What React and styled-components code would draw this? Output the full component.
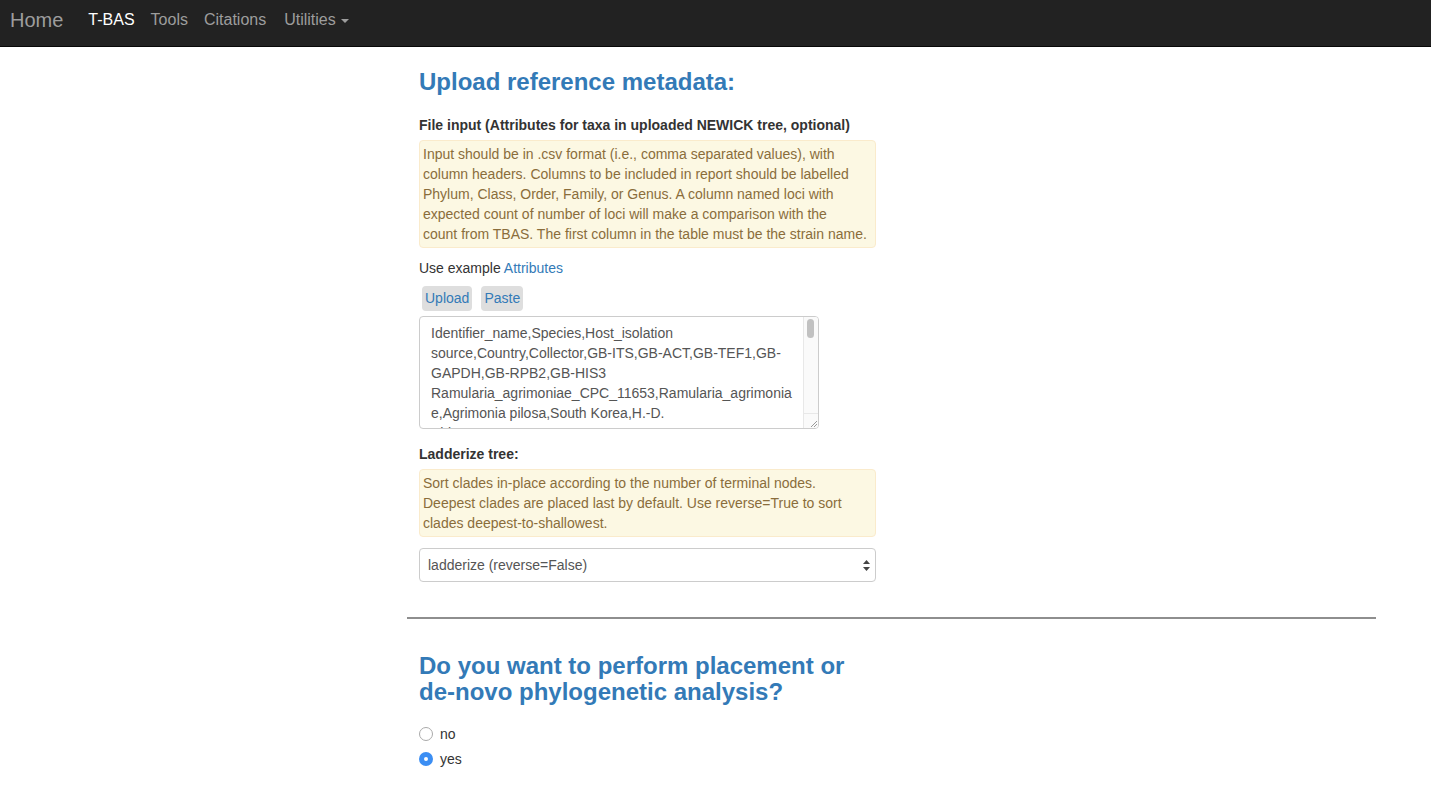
import React from 'react'
import styled, { createGlobalStyle } from 'styled-components'

const GlobalStyle = createGlobalStyle`
body {
  margin: 0;
  font-family: "Liberation Sans", Arial, sans-serif;
  font-size: 14px;
  line-height: 20px;
  color: #333;
  background: #fff;
}
* { box-sizing: border-box; }
`

const Navbar = styled.nav`
display: flex;
align-items: flex-start;
height: 47px;
padding: 10px 0 0 10px;
background: #222;
border-bottom: 1px solid #080808;
`

const Brand = styled.a`
font-size: 20px;
line-height: 20px;
color: #9d9d9d;
margin-right: 25px;
`

const NavLink = styled.a`
font-size: 16px;
line-height: 20px;
color: ${p => (p.$active ? '#fff' : '#9d9d9d')};
margin-right: ${p => p.$gap || '16px'};
display: flex;
align-items: center;
`

const Caret = styled.span`
display: inline-block;
width: 0;
height: 0;
margin-left: 5px;
margin-top: 2px;
border-top: 4px solid #9d9d9d;
border-left: 4px solid transparent;
border-right: 4px solid transparent;
`

const Container = styled.main`
margin-left: 407px;
width: 969px;
padding-top: 2px;
`

const Column = styled.section`
width: 481px;
padding: 0 12px;
`

const Heading = styled.h3`
font-size: 24px;
line-height: 26px;
font-weight: bold;
color: #337ab7;
margin: ${p => p.$top || '20px'} 0 0 0;
`

const Label = styled.label`
display: block;
font-weight: bold;
margin-top: ${p => p.$top || '20px'};
margin-bottom: 5px;
`

const Help = styled.div`
background: #fcf8e3;
border: 1px solid #faebcc;
border-radius: 4px;
color: #8a6d3b;
padding: 3px 3px;
`

const Line = styled.div`
margin-top: 10px;
`

const Link = styled.a`
color: #337ab7;
text-decoration: none;
`

const Buttons = styled.div`
display: flex;
gap: 9px;
margin: 8px 0 5px 3px;
`

const SmallBtn = styled.button`
font-family: inherit;
font-size: 14px;
line-height: 19px;
color: #337ab7;
background: #dedede;
border: none;
border-radius: 4px;
padding: 3px 3px;
`

const TextWrap = styled.div`
position: relative;
width: 400px;
height: 113px;
`

const TextArea = styled.textarea`
display: block;
width: 400px;
height: 113px;
padding: 6px 25px 0 11px;
font-family: inherit;
font-size: 14px;
line-height: 20px;
color: #555;
border: 1px solid #ccc;
border-radius: 4px;
resize: none;
overflow: hidden;
overflow-wrap: break-word;
`

const ScrollTrack = styled.div`
position: absolute;
top: 1px;
right: 1px;
bottom: 1px;
width: 15px;
display: flex;
flex-direction: column;
background: #fafafa;
border-left: 1px solid #e8e8e8;
border-radius: 0 3px 3px 0;
pointer-events: none;
`

const Thumb = styled.div`
width: 7px;
height: 19px;
margin: 2px 0 0 3px;
border-radius: 4px;
background: #c1c1c1;
`

const Corner = styled.div`
margin-top: auto;
height: 15px;
border-top: 1px solid #e8e8e8;
display: flex;
align-items: flex-end;
justify-content: flex-end;
`

const csv = `Identifier_name,Species,Host_isolation source,Country,Collector,GB-ITS,GB-ACT,GB-TEF1,GB-GAPDH,GB-RPB2,GB-HIS3
Ramularia_agrimoniae_CPC_11653,Ramularia_agrimoniae,Agrimonia pilosa,South Korea,H.-D. Shin,KJ504764,KJ504443,KJ504632,KJ504587,KJ504421,KJ504566
Ramularia_alangii_CPC_15239,Ramularia_alangii,Alangium kurzii,South Korea,H.-D. Shin,KJ504765,KJ504444,KJ504633,KJ504588,KJ504422,KJ504567
Ramularia_anomala_CBS_114416,Ramularia_anomala,Unknown,Netherlands,P.W. Crous,KJ504766,KJ504445,KJ504634,KJ504589,KJ504423,KJ504568`

const SelectWrap = styled.div`
position: relative;
margin-top: 11px;
`

const Select = styled.select`
appearance: none;
width: 100%;
height: 34px;
padding: 6px 8px;
font-family: inherit;
font-size: 14px;
color: #555;
background: #fff;
border: 1px solid #ccc;
border-radius: 4px;
`

const Arrows = styled.svg`
position: absolute;
right: 6px;
top: 12px;
pointer-events: none;
`

const Rule = styled.hr`
margin: 35px 0 0 0;
border: none;
border-top: 2px solid #8e8e8e;
`

const Radios = styled.div`
margin-top: 16px;
`

const RadioRow = styled.label`
display: flex;
align-items: center;
height: 25px;
color: #333;
`

const Radio = styled.input`
appearance: none;
width: 14px;
height: 14px;
margin: 0 7px 0 0;
border-radius: 50%;
border: 1px solid #aaa;
background: #fff;
&:checked {
  border: 5px solid #3b8ef3;
  background: #fff;
}
`

const App = () => {
    return (
        <>
            <GlobalStyle />
            <Navbar>
                <Brand>Home</Brand>
                <NavLink $active>T-BAS</NavLink>
                <NavLink>Tools</NavLink>
                <NavLink $gap="18px">Citations</NavLink>
                <NavLink>Utilities<Caret /></NavLink>
            </Navbar>
            <Container>
                <Column>
                    <Heading>Upload reference metadata:</Heading>
                    <Label>File input (Attributes for taxa in uploaded NEWICK tree, optional)</Label>
                    <Help>
                        Input should be in .csv format (i.e., comma separated values), with<br />
                        column headers. Columns to be included in report should be labelled<br />
                        Phylum, Class, Order, Family, or Genus. A column named loci with<br />
                        expected count of number of loci will make a comparison with the<br />
                        count from TBAS. The first column in the table must be the strain name.
                    </Help>
                    <Line>Use example <Link>Attributes</Link></Line>
                    <Buttons>
                        <SmallBtn>Upload</SmallBtn>
                        <SmallBtn>Paste</SmallBtn>
                    </Buttons>
                    <TextWrap>
                        <TextArea defaultValue={csv} />
                        <ScrollTrack>
                            <Thumb />
                            <Corner>
                                <svg width="10" height="10" viewBox="0 0 10 10">
                                    <path d="M9 3 L3 9 M9 6 L6 9" stroke="#999" strokeWidth="1" />
                                </svg>
                            </Corner>
                        </ScrollTrack>
                    </TextWrap>
                    <Label $top="15px">Ladderize tree:</Label>
                    <Help>
                        Sort clades in-place according to the number of terminal nodes.<br />
                        Deepest clades are placed last by default. Use reverse=True to sort<br />
                        clades deepest-to-shallowest.
                    </Help>
                    <SelectWrap>
                        <Select defaultValue="f">
                            <option value="f">ladderize (reverse=False)</option>
                            <option value="t">ladderize (reverse=True)</option>
                        </Select>
                        <Arrows width="7" height="11" viewBox="0 0 7 11">
                            <path d="M3.5 0 L7 4 H0 Z M3.5 11 L7 7 H0 Z" fill="#444" />
                        </Arrows>
                    </SelectWrap>
                </Column>
                <Rule />
                <Column>
                    <Heading $top="34px">Do you want to perform placement or de-novo phylogenetic analysis?</Heading>
                    <Radios>
                        <RadioRow><Radio type="radio" name="mode" />no</RadioRow>
                        <RadioRow><Radio type="radio" name="mode" defaultChecked />yes</RadioRow>
                    </Radios>
                </Column>
            </Container>
        </>
    )
}

export default App
